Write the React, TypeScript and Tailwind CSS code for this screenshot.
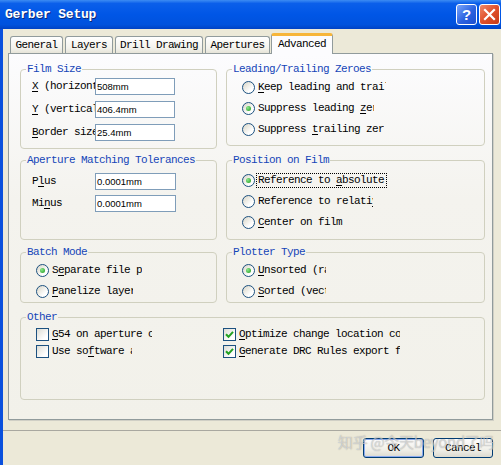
import React from "react";

const mono = "font-['Liberation_Mono',monospace] text-[11px] tracking-[-0.6px] leading-[13px]";

function Acc({ t }: { t: string }) {
  const i = t.indexOf("&");
  if (i < 0) return <>{t}</>;
  return (
    <>
      {t.slice(0, i)}
      <span className="underline underline-offset-[2px]">{t[i + 1]}</span>
      {t.slice(i + 2)}
    </>
  );
}

function Group({
  title,
  className,
  children,
}: {
  title: string;
  className: string;
  children?: React.ReactNode;
}) {
  return (
    <fieldset className={`border border-[#d0d0bf] rounded-[4px] min-w-0 ${className}`}>
      <legend className="ml-[5px] px-[1px] text-[#1545b8] leading-[13px]">{title}</legend>
      {children}
    </fieldset>
  );
}

function Radio({
  label,
  checked = false,
  w,
  focus = false,
}: {
  label: string;
  checked?: boolean;
  w: string;
  focus?: boolean;
}) {
  return (
    <div className="flex items-center h-[21px]">
      <span className="w-[13px] h-[13px] rounded-full border border-[#1c5180] bg-[linear-gradient(135deg,#d8d5c6,#ffffff_70%)] flex items-center justify-center shrink-0">
        {checked && (
          <span className="w-[5px] h-[5px] rounded-full bg-[radial-gradient(circle_at_35%_35%,#8ce88c,#1b981b)]" />
        )}
      </span>
      <span
        className={`ml-[1px] px-[1px] overflow-hidden whitespace-nowrap border ${
          focus ? "border-dotted border-black" : "border-transparent"
        } ${w}`}
      >
        <Acc t={label} />
      </span>
    </div>
  );
}

function Check({ label, checked = false, w }: { label: string; checked?: boolean; w: string }) {
  return (
    <div className="flex items-center h-[17px]">
      <span className="w-[13px] h-[13px] border border-[#1c5180] bg-[linear-gradient(135deg,#dcdcd4,#ffffff_75%)] flex items-center justify-center shrink-0">
        {checked && (
          <svg width="9" height="9" viewBox="0 0 9 9">
            <path d="M1 4.2 L3.5 6.8 L8 1.8" stroke="#21a121" strokeWidth="2" fill="none" />
          </svg>
        )}
      </span>
      <span className={`ml-[3px] overflow-hidden whitespace-nowrap ${w}`}>
        <Acc t={label} />
      </span>
    </div>
  );
}

function Field({ label, value, w = "w-[80px]" }: { label: string; value: string; w?: string }) {
  return (
    <div className="flex items-center h-[17px]">
      <span className="w-[63px] overflow-hidden whitespace-nowrap">
        <Acc t={label} />
      </span>
      <span
        className={`h-[17px] bg-white border border-[#7f9db9] flex items-center pl-[1px] font-['Liberation_Sans',sans-serif] text-[9.5px] tracking-normal ${w}`}
      >
        {value}
      </span>
    </div>
  );
}

function Tab({ label, w }: { label: string; w: string }) {
  return (
    <div
      className={`h-[17px] border-t border-l border-r border-[#919b9c] rounded-t-[3px] bg-[linear-gradient(#ffffff,#f3f2ec_70%,#e6e4d8)] flex items-center justify-center ${w}`}
    >
      {label}
    </div>
  );
}

function Button({ label, def = false }: { label: string; def?: boolean }) {
  return (
    <div
      className={`h-[20px] rounded-[3px] border border-[#003c74] bg-[linear-gradient(#ffffff,#f0efe8_60%,#dcdad0)] flex items-center justify-center ${
        def ? "w-[61px] shadow-[inset_0_0_0_1px_#8aaaef]" : "w-[60px]"
      }`}
    >
      {label}
    </div>
  );
}

export default function App() {
  return (
    <div className={`w-[501px] h-[465px] bg-[#ece9d8] flex flex-col overflow-hidden relative text-black ${mono}`}>
      {/* title bar */}
      <div className="h-[29px] shrink-0 flex items-center pl-[5px] pr-[1px] bg-[linear-gradient(180deg,#3d8cf3_0%,#0b5fea_12%,#0056e6_50%,#0052dd_85%,#0042c4_100%)]">
        <span className="flex-1 text-white font-bold text-[13px] tracking-[-0.2px] [text-shadow:1px_1px_0_#0a2a7a]">
          Gerber Setup
        </span>
        <div className="flex gap-[2px]">
          <div className="w-[21px] h-[21px] rounded-[3px] border border-white bg-[linear-gradient(135deg,#7aa6fb,#2b62e0_55%,#1c4fcf)] flex items-center justify-center text-white font-bold text-[15px] font-['Liberation_Sans',sans-serif] tracking-normal">
            ?
          </div>
          <div className="w-[21px] h-[21px] rounded-[3px] border border-white bg-[linear-gradient(135deg,#ef8a6a,#e0502b_50%,#c73a16)] flex items-center justify-center">
            <svg width="13" height="13" viewBox="0 0 13 13">
              <path d="M2 2 L11 11 M11 2 L2 11" stroke="white" strokeWidth="2.2" strokeLinecap="square" />
            </svg>
          </div>
        </div>
      </div>

      {/* body */}
      <div className="flex-1 flex flex-col border-l-[3px] border-l-[#0a50dd] pt-[4px] pl-[5px]">
        {/* tabs */}
        <div className="flex items-end gap-[2px] pl-[2px] h-[20px] relative z-10">
          <Tab label="General" w="w-[53px]" />
          <Tab label="Layers" w="w-[48px]" />
          <Tab label="Drill Drawing" w="w-[88px]" />
          <Tab label="Apertures" w="w-[65px]" />
          <div className="-ml-[1px] w-[62px] h-[21px] -mb-[1px] border-t-[3px] border-t-[#f7b63a] border-l border-r border-[#919b9c] rounded-t-[3px] bg-[#fcfcfe] flex items-center justify-center pb-[2px]">
            Advanced
          </div>
        </div>

        {/* panel */}
        <div className="w-[485px] h-[367px] border border-[#919b9c] bg-[linear-gradient(#fcfcfe,#f4f3ee_40%,#f2f1ea)] pt-[9px] pl-[11px] shadow-[1px_1px_0_#d0cfc5]">
          <div className="flex gap-[9px] items-start">
            <Group title="Film Size" className="w-[197px] h-[86px]">
              <div className="mt-[2px] pl-[11px] flex flex-col gap-[6px]">
                <Field label="&X (horizontal" value="508mm" />
                <Field label="&Y (vertical)" value="406.4mm" />
                <Field label="&Border size" value="25.4mm" />
              </div>
            </Group>
            <Group title="Leading/Trailing Zeroes" className="w-[259px] h-[83px]">
              <div className="mt-[1px] pl-[15px] flex flex-col">
                <Radio label="&Keep leading and trail" w="w-[131px]" />
                <Radio label="Suppress leading &zer" checked w="w-[119px]" />
                <Radio label="Suppress &trailing zer" w="w-[129px]" />
              </div>
            </Group>
          </div>

          <div className="mt-[5px] flex gap-[9px] items-start">
            <Group title="Aperture Matching Tolerances" className="w-[197px] h-[86px]">
              <div className="mt-[6px] pl-[11px] flex flex-col gap-[5px]">
                <Field label="P&lus" value="0.0001mm" w="w-[81px]" />
                <Field label="Mi&nus" value="0.0001mm" w="w-[81px]" />
              </div>
            </Group>
            <Group title="Position on Film" className="w-[259px] h-[86px]">
              <div className="mt-[3px] pl-[15px] flex flex-col">
                <Radio label="Reference to &absolute" checked focus w="w-[131px]" />
                <Radio label="Reference to relati&ve" w="w-[118px]" />
                <Radio label="&Center on film" w="w-[131px]" />
              </div>
            </Group>
          </div>

          <div className="mt-[6px] flex gap-[9px] items-start">
            <Group title="Batch Mode" className="w-[197px] h-[57px]">
              <div className="mt-[1px] pl-[15px] flex flex-col">
                <Radio label="S&eparate file per" checked w="w-[93px]" />
                <Radio label="&Panelize layers" w="w-[84px]" />
              </div>
            </Group>
            <Group title="Plotter Type" className="w-[259px] h-[57px]">
              <div className="mt-[1px] pl-[15px] flex flex-col">
                <Radio label="&Unsorted (raster)" checked w="w-[71px]" />
                <Radio label="&Sorted (vector)" w="w-[71px]" />
              </div>
            </Group>
          </div>

          <Group title="Other" className="mt-[8px] w-[465px] h-[89px]">
            <div className="mt-[2px] pl-[15px] flex">
              <div className="flex flex-col w-[187px]">
                <Check label="&G54 on aperture change" w="w-[100px]" />
                <Check label="Use so&ftware arcs" w="w-[80px]" />
              </div>
              <div className="flex flex-col">
                <Check label="&Optimize change location commands" checked w="w-[161px]" />
                <Check label="&Generate DRC Rules export file" checked w="w-[161px]" />
              </div>
            </div>
          </Group>
        </div>

        <div className="mt-[10px] h-px bg-[#a9a8a0] -ml-[5px]" />

        {/* buttons */}
        <div className="mt-[7px] flex justify-end gap-[9px] pr-[8px]">
          <Button label="OK" def />
          <Button label="Cancel" />
        </div>
      </div>

      <div className="absolute left-[338px] top-[432px] whitespace-nowrap pointer-events-none font-['Noto_Sans_CJK_SC',sans-serif] text-[15px] tracking-[-0.3px] leading-[20px] text-[rgba(255,255,255,0.5)] [text-shadow:0_0_1px_rgba(90,90,90,0.6)]">
        知乎 @今天beyond了吗
      </div>
    </div>
  );
}
